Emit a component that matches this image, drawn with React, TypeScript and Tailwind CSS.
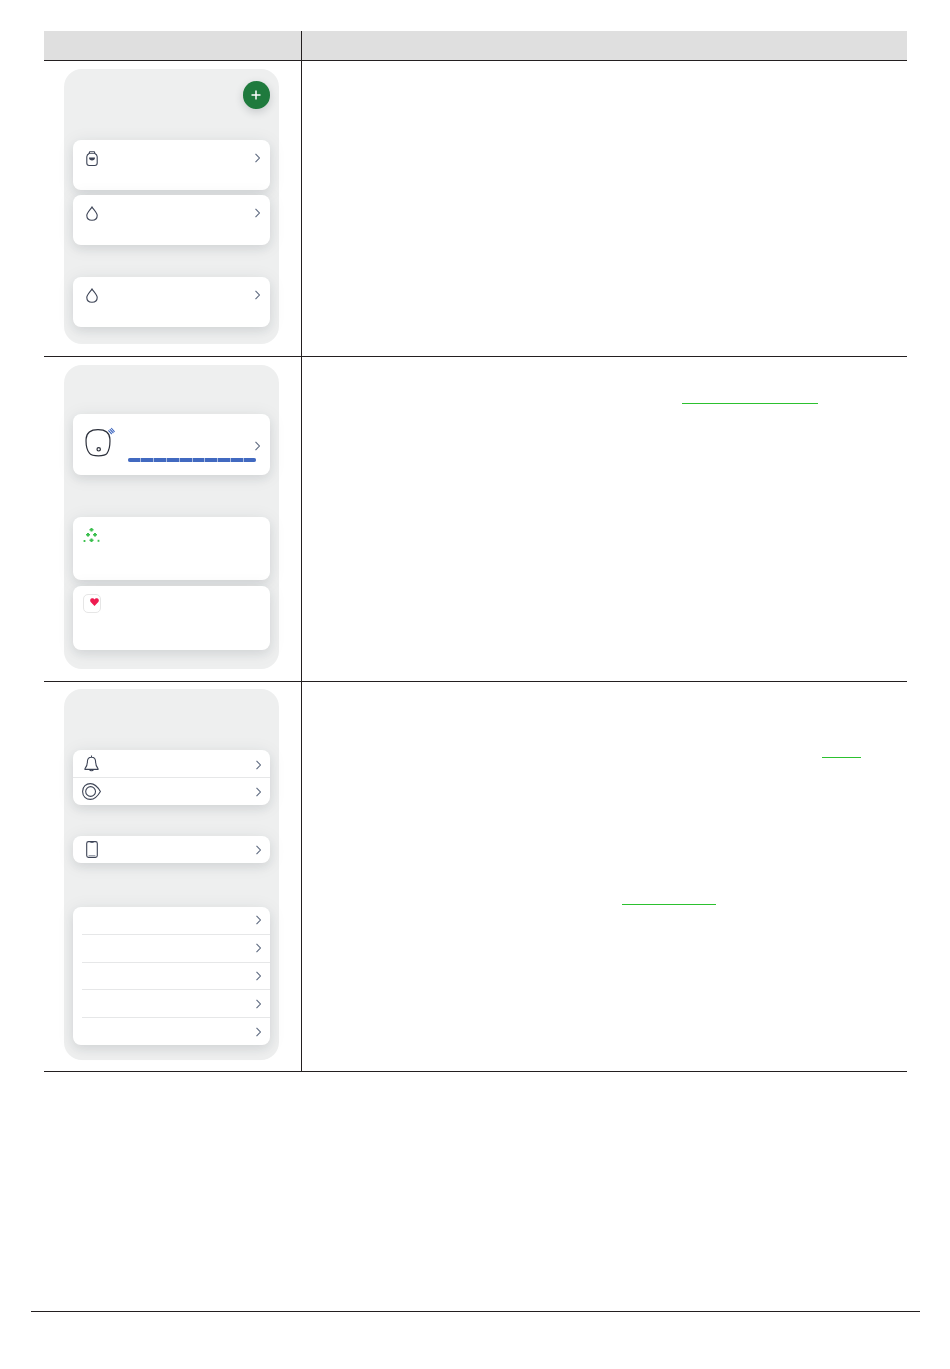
const cardShadow = "shadow-[0_4px_8px_rgba(40,50,60,0.08),0_2px_18px_rgba(40,50,60,0.08)]";

function Chevron() {
  return (
    <svg width="5" height="10" viewBox="0 0 5 10" fill="none" stroke="#5f6b80" strokeWidth="1.1" className="shrink-0">
      <path d="M0.5 0.8 L4.4 5 L0.5 9.2" />
    </svg>
  );
}

function BottleIcon() {
  return (
    <svg width="12" height="16" viewBox="0 0.7 12 16" fill="none" stroke="#3d4456" strokeWidth="1.1">
      <path d="M3.2 0.8 H8.8 M3.4 3 V1.6 M8.6 3 V1.6" />
      <path d="M3.4 3 H8.6 C10.4 4 11.2 5 11.2 6.5 V12.8 C11.2 14.4 10.2 15.2 8.8 15.2 H3.2 C1.8 15.2 0.8 14.4 0.8 12.8 V6.5 C0.8 5 1.6 4 3.4 3 Z" />
      <path d="M3 7.2 H9 C9 9.4 7.6 10.2 6 10.2 C4.4 10.2 3 9.4 3 7.2 Z" fill="#3d4456" stroke="none" />
    </svg>
  );
}

function DropIcon() {
  return (
    <svg width="12" height="15" viewBox="0 0 12 15" fill="none" stroke="#3d4456" strokeWidth="1.1">
      <path d="M6 0.9 C4.6 3.4 0.8 6.6 0.8 9.6 C0.8 12.4 3 14.3 6 14.3 C9 14.3 11.2 12.4 11.2 9.6 C11.2 6.6 7.4 3.4 6 0.9 Z" />
    </svg>
  );
}

function RobotIcon() {
  return (
    <svg width="30" height="31" viewBox="0 0 30 31" fill="none">
      <path d="M13 2.6 C20 2.6 24.6 5.6 24.9 12 C25.2 18 24.4 23 22 26.4 C19.6 29.6 7.4 29.6 4.6 26.4 C1.8 23 0.8 17.4 1.1 12 C1.5 6 6 2.6 13 2.6 Z" stroke="#2b2f3a" strokeWidth="1.2" />
      <circle cx="13.7" cy="22.3" r="1.7" stroke="#2b2f3a" strokeWidth="1.2" />
      <path d="M23.4 3.4 L26.8 7 M24.8 2.2 L28.4 6 M26.2 1 L29.6 4.8" stroke="#4169c0" strokeWidth="1.1" />
    </svg>
  );
}

function DotsIcon() {
  return (
    <svg width="17" height="15" viewBox="0 0 17 15" fill="#3cc04f">
      <path d="M7.5 0 H9.5 V1 H10.5 V2.6 H9.5 V3.6 H7.5 V2.6 H6.5 V1 H7.5 Z" />
      <path d="M4 5 H6 V6 H7 V7.6 H6 V8.6 H4 V7.6 H3 V6 H4 Z" />
      <path d="M11 5 H13 V6 H14 V7.6 H13 V8.6 H11 V7.6 H10 V6 H11 Z" />
      <path d="M7.5 10.4 H9.5 V11.4 H10.5 V13 H9.5 V14 H7.5 V13 H6.5 V11.4 H7.5 Z" />
      <rect x="0.6" y="12" width="1.8" height="2" />
      <rect x="14.6" y="11.8" width="1.8" height="2" />
    </svg>
  );
}

function HeartIcon() {
  return (
    <div className="w-[18px] h-[19px] rounded-[5px] border border-[#e6e6e6] bg-white flex items-start justify-end pt-[3px] pr-[1px]">
      <svg width="9" height="8" viewBox="0 0 10 9" fill="#ee1b50">
        <path d="M5 9 L0.7 4.6 C-0.4 3.2 0 0.8 2.2 0.3 C3.4 0.1 4.4 0.7 5 1.6 C5.6 0.7 6.6 0.1 7.8 0.3 C10 0.8 10.4 3.2 9.3 4.6 Z" />
      </svg>
    </div>
  );
}

function BellIcon() {
  return (
    <svg width="15" height="17" viewBox="0 0 15 17" fill="none" stroke="#3d4456" strokeWidth="1.1">
      <path d="M7.5 0.6 V2.2 M7.5 2.2 C10.2 2.2 11.6 4.2 11.6 6.8 C11.6 10 12.6 12 14 13.6 V14.4 H1 V13.6 C2.4 12 3.4 10 3.4 6.8 C3.4 4.2 4.8 2.2 7.5 2.2 Z" />
      <path d="M5.6 14.6 C6 16.2 9 16.2 9.4 14.6" />
    </svg>
  );
}

function EyeIcon() {
  return (
    <svg width="19" height="17" viewBox="0 0 19 17" fill="none" stroke="#3d4456" strokeWidth="1.1">
      <path d="M0.6 8.5 C0.6 3.6 4.2 0.6 8.4 0.6 C12 0.6 15.8 4 18.4 8.5 C15.8 13 12 16.4 8.4 16.4 C4.2 16.4 0.6 13.4 0.6 8.5 Z" />
      <circle cx="8.6" cy="8.5" r="4.9" />
    </svg>
  );
}

function PhoneIcon() {
  return (
    <svg width="12" height="17" viewBox="0 0 12 17" fill="none" stroke="#3d4456" strokeWidth="1.1">
      <rect x="0.7" y="0.6" width="10.6" height="15.8" rx="1.8" />
      <path d="M4.4 1.2 H7.6" />
      <path d="M2.6 14.6 H9.4" stroke="#9aa0ac" />
    </svg>
  );
}

function Panel({ height, paddingTop, children }: { height: string; paddingTop: string; children: React.ReactNode }) {
  return (
    <div className={`ml-[20px] w-[215px] rounded-[18px] bg-[#eeefef] px-[9px] ${height} ${paddingTop}`}>
      {children}
    </div>
  );
}

function IconCard({ icon, className }: { icon: React.ReactNode; className: string }) {
  return (
    <div className={`flex items-start justify-between bg-white rounded-[8px] pl-[12.5px] pr-[10px] pt-[10.5px] ${cardShadow} ${className}`}>
      {icon}
      <div className="pt-[2px]">
        <Chevron />
      </div>
    </div>
  );
}

function MenuRow({ icon, indent, nudge }: { icon?: React.ReactNode; indent?: boolean; nudge?: boolean }) {
  return (
    <div className={`flex-1 flex items-center border-t border-[#e6e7e8] first:border-t-0 ${indent ? "ml-[9px]" : ""}`}>
      <div className="w-[28px] pl-[9px] flex items-center justify-center">{icon}</div>
      <div className={`ml-auto mr-[9px] ${nudge ? "mt-[2px]" : ""}`}>
        <Chevron />
      </div>
    </div>
  );
}

export default function App() {
  return (
    <div className="min-h-[1369px] bg-white pt-[31px]">
      <div className="ml-[44px] w-[863px]">
        <div className="grid grid-cols-[258px_1fr] h-[30px] bg-[#dfdfdf] border-b border-[#231f20]">
          <div className="border-r border-[#231f20]" />
          <div />
        </div>

        <div className="grid grid-cols-[258px_1fr] h-[296px] border-b border-[#231f20]">
          <div className="border-r border-[#231f20] pt-[8px]">
            <Panel height="h-[275px]" paddingTop="pt-[12px]">
              <div className="flex justify-end h-[27px]">
                <div className="w-[27.5px] h-[27.5px] rounded-full bg-[#1f7a3d] flex items-center justify-center shadow-[0_3px_8px_rgba(40,50,60,0.2)]">
                  <svg width="10" height="10" viewBox="0 0 10 10" stroke="#ffffff" strokeWidth="1.5">
                    <path d="M5 0.5 V9.5 M0.5 5 H9.5" />
                  </svg>
                </div>
              </div>
              <IconCard icon={<BottleIcon />} className="h-[50px] mt-[32px]" />
              <IconCard icon={<DropIcon />} className="h-[50px] mt-[5px]" />
              <IconCard icon={<DropIcon />} className="h-[50px] mt-[32px]" />
            </Panel>
          </div>
          <div />
        </div>

        <div className="grid grid-cols-[258px_1fr] h-[325px] border-b border-[#231f20]">
          <div className="border-r border-[#231f20] pt-[8px]">
            <Panel height="h-[304px]" paddingTop="pt-[49px]">
              <div className={`h-[61px] flex bg-white rounded-[8px] pl-[12px] pr-[10px] pt-[13px] ${cardShadow}`}>
                <RobotIcon />
                <div className="flex-1 flex flex-col items-end pl-[13px] pt-[14px]">
                  <Chevron />
                  <div className="flex gap-px w-[128px] h-[4px] mt-[7px] mr-[4px] bg-[#a9bce3] rounded-full">
                    {Array.from({ length: 10 }).map((_, i) => (
                      <div key={i} className="flex-1 bg-[#4169c0] first:rounded-l-full last:rounded-r-full" />
                    ))}
                  </div>
                </div>
              </div>
              <div className={`h-[63px] mt-[42px] bg-white rounded-[8px] pl-[10px] pt-[11px] ${cardShadow}`}>
                <DotsIcon />
              </div>
              <div className={`h-[64px] mt-[6px] bg-white rounded-[8px] pl-[9.5px] pt-[8px] ${cardShadow}`}>
                <HeartIcon />
              </div>
            </Panel>
          </div>
          <div className="pt-[46px] pl-[380px]">
            <div className="w-[136px] h-px bg-[#2cc12f]" />
          </div>
        </div>

        <div className="grid grid-cols-[258px_1fr] h-[390px] border-b border-[#231f20]">
          <div className="border-r border-[#231f20] pt-[7px]">
            <Panel height="h-[371px]" paddingTop="pt-[61px]">
              <div className={`h-[55px] flex flex-col bg-white rounded-[8px] ${cardShadow}`}>
                <MenuRow icon={<BellIcon />} nudge />
                <MenuRow icon={<EyeIcon />} />
              </div>
              <div className={`h-[27px] mt-[31px] flex flex-col bg-white rounded-[8px] ${cardShadow}`}>
                <MenuRow icon={<PhoneIcon />} />
              </div>
              <div className={`h-[138px] mt-[44px] flex flex-col bg-white rounded-[8px] ${cardShadow}`}>
                <MenuRow indent />
                <MenuRow indent />
                <MenuRow indent />
                <MenuRow indent />
                <MenuRow indent />
              </div>
            </Panel>
          </div>
          <div className="pt-[75px]">
            <div className="ml-[520px] w-[39px] h-px bg-[#2cc12f]" />
            <div className="ml-[320px] mt-[146px] w-[94px] h-px bg-[#2cc12f]" />
          </div>
        </div>
      </div>

      <div className="ml-[31px] mt-[239px] w-[889px] h-px bg-[#231f20]" />
    </div>
  );
}
